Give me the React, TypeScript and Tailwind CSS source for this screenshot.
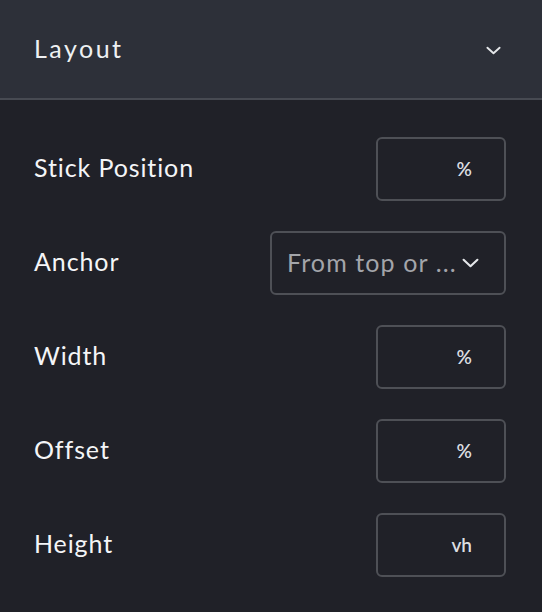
const rows = [
  { label: "Stick Position", suffix: "%" },
  { label: "Anchor", select: "From top or ..." },
  { label: "Width", suffix: "%" },
  { label: "Offset", suffix: "%" },
  { label: "Height", suffix: "vh" },
];

function Chevron({ className }: { className?: string }) {
  return (
    <svg viewBox="0 0 16 9" fill="none" className={className}>
      <polyline
        points="1.5,1.5 8,7.5 14.5,1.5"
        stroke="currentColor"
        strokeWidth={2}
        strokeLinecap="round"
        strokeLinejoin="round"
      />
    </svg>
  );
}

export default function App() {
  return (
    <div className="h-[612px] w-[542px] bg-[#202128] font-['Lato','Noto_Sans',sans-serif] text-white">
      <div className="flex h-[100px] items-center justify-between border-b-2 border-[#474a52] bg-[#2d3039] pl-[34px] pr-[41px]">
        <h2 className="text-[25px] tracking-[2.5px] text-[#eef0f2]">Layout</h2>
        <Chevron className="mt-[2px] h-[9px] w-[15px] text-[#e5e7ea]" />
      </div>

      <div className="flex flex-col gap-[30px] pl-[34px] pr-[36px] pt-[37px]">
        {rows.map((row) => (
          <div key={row.label} className="flex h-[64px] items-center justify-between">
            <span className="-mt-[2px] text-[25px] tracking-[0.9px] text-[#f4f5f7]">{row.label}</span>
            {row.select ? (
              <div className="flex h-[64px] w-[236px] items-center gap-[5px] rounded-[6px] border-2 border-[#4e5056] pl-[15px]">
                <span className="text-[25px] tracking-[1.1px] text-[#a3a5aa]">{row.select}</span>
                <Chevron className="h-[10px] w-[17px] text-[#e5e7ea]" />
              </div>
            ) : (
              <div className="flex h-[64px] w-[130px] items-center justify-end rounded-[6px] border-2 border-[#4e5056] pr-[32px]">
                <span className="text-[19px] font-semibold text-[#dcdee1]">{row.suffix}</span>
              </div>
            )}
          </div>
        ))}
      </div>
    </div>
  );
}
